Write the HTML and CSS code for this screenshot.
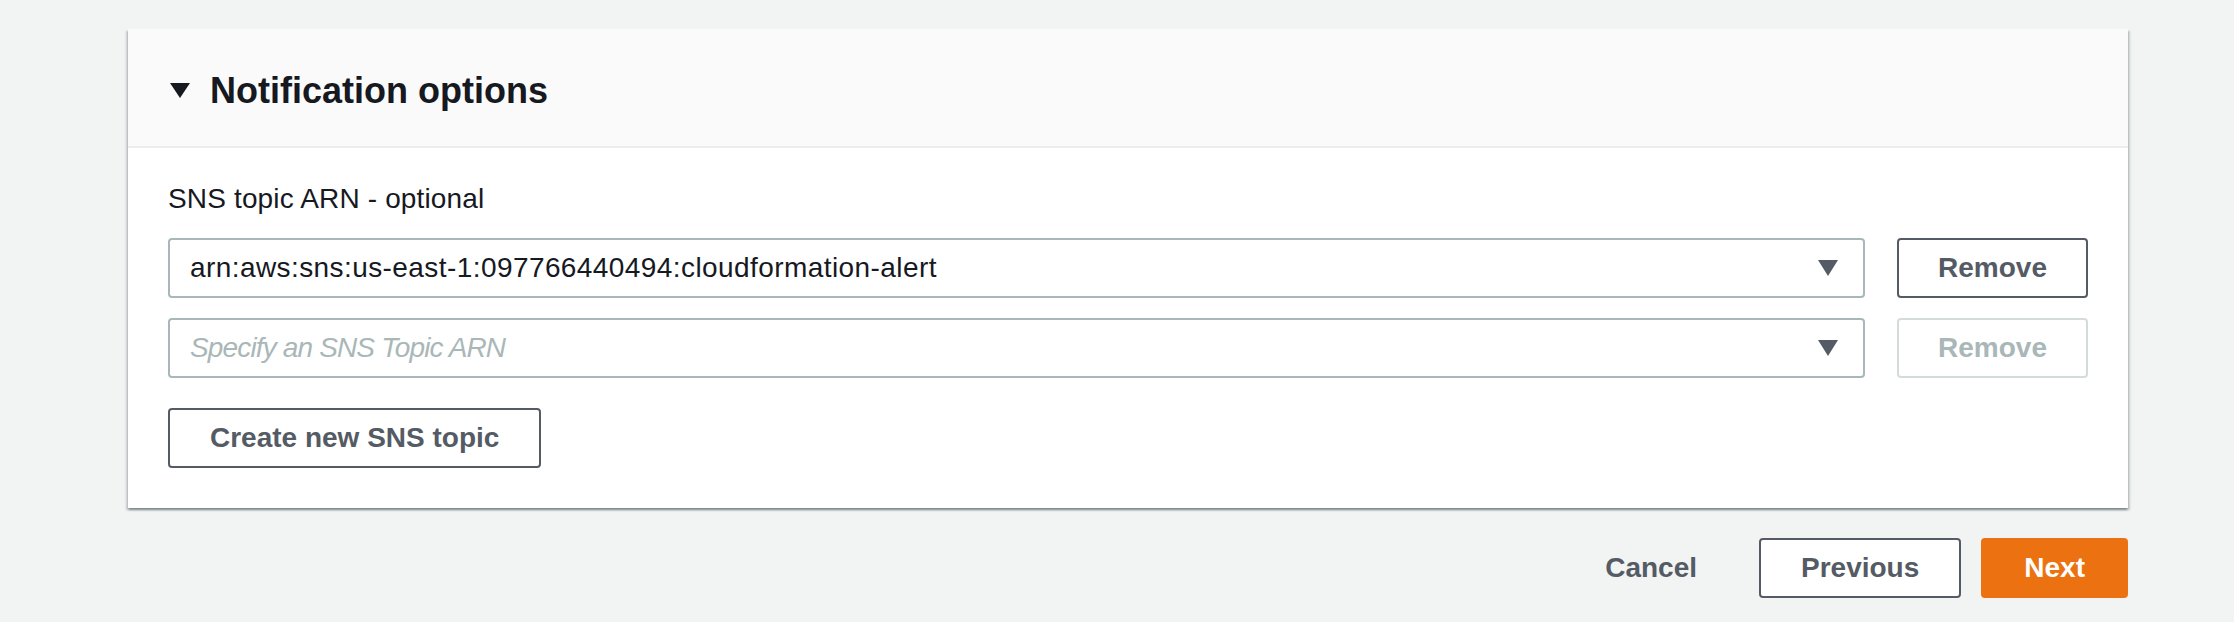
FILE: index.html
```html
<!DOCTYPE html>
<html lang="en">
<head>
<meta charset="utf-8">
<title>Notification options</title>
<link rel="stylesheet" href="styles.css">
</head>
<body>
<main class="page">
  <section class="card">
    <header class="card-header">
      <svg class="caret" width="20" height="15" viewBox="0 0 20 15" aria-hidden="true"><polygon points="0,0 20,0 10,15" fill="#16191f"/></svg>
      <h2 class="card-title">Notification options</h2>
    </header>
    <div class="card-body">
      <label class="field-label">SNS topic ARN - optional</label>
      <div class="rows">
        <div class="row">
          <div class="select">
            <span class="select-value">arn:aws:sns:us-east-1:097766440494:cloudformation-alert</span>
            <svg class="select-arrow" width="20" height="16" viewBox="0 0 20 16" aria-hidden="true"><polygon points="0,0 20,0 10,16" fill="#545b64"/></svg>
          </div>
          <button class="btn btn-remove">Remove</button>
        </div>
        <div class="row">
          <div class="select">
            <span class="select-placeholder">Specify an SNS Topic ARN</span>
            <svg class="select-arrow" width="20" height="16" viewBox="0 0 20 16" aria-hidden="true"><polygon points="0,0 20,0 10,16" fill="#545b64"/></svg>
          </div>
          <button class="btn btn-remove btn-disabled">Remove</button>
        </div>
      </div>
      <div class="create-row">
        <button class="btn btn-normal">Create new SNS topic</button>
      </div>
    </div>
  </section>
  <footer class="actions">
    <button class="btn btn-link">Cancel</button>
    <button class="btn btn-normal">Previous</button>
    <button class="btn btn-primary">Next</button>
  </footer>
</main>
</body>
</html>
```
FILE: styles.css
```css
html, body {
  margin: 0;
  padding: 0;
  background: #f2f3f3;
}

body {
  font-family: "Liberation Sans", Arial, sans-serif;
  color: #16191f;
}

.page {
  width: 2000px;
  margin-left: 128px;
  padding-top: 29px;
}

.card {
  background: #ffffff;
  box-shadow: 0 2px 2px 0 rgba(0, 28, 36, 0.3), 2px 2px 2px 0 rgba(0, 28, 36, 0.15), -2px 2px 2px 0 rgba(0, 28, 36, 0.15);
}

.card-header {
  display: flex;
  align-items: center;
  gap: 20px;
  background: #fafafa;
  height: 119px;
  box-sizing: border-box;
  padding: 6px 40px 0 42px;
  border-bottom: 2px solid #eaeded;
}

.caret {
  display: block;
  flex: none;
}

.card-title {
  margin: 0;
  font-size: 36px;
  line-height: 44px;
  font-weight: 700;
  color: #16191f;
}

.card-body {
  padding: 31px 40px 40px;
}

.field-label {
  display: block;
  font-size: 28px;
  line-height: 40px;
  letter-spacing: 0.15px;
  color: #16191f;
}

.rows {
  display: flex;
  flex-direction: column;
  gap: 20px;
  margin-top: 19px;
}

.row {
  display: flex;
  gap: 32px;
  align-items: stretch;
}

.select {
  flex: 1;
  height: 60px;
  box-sizing: border-box;
  border: 2px solid #aab7b8;
  border-radius: 4px;
  display: flex;
  align-items: center;
  justify-content: space-between;
  padding: 0 25px 0 20px;
  background: #ffffff;
}

.select-value {
  font-size: 28px;
  letter-spacing: 0.42px;
  color: #16191f;
  white-space: nowrap;
}

.select-placeholder {
  font-size: 28px;
  font-style: italic;
  letter-spacing: -0.85px;
  color: #aab7b8;
  white-space: nowrap;
}

.select-arrow {
  display: block;
  flex: none;
}

.btn {
  font-family: "Liberation Sans", Arial, sans-serif;
  font-size: 28px;
  font-weight: 700;
  height: 60px;
  box-sizing: border-box;
  border: 2px solid #545b64;
  border-radius: 4px;
  background: #ffffff;
  color: #545b64;
  padding: 0 40px;
  display: inline-flex;
  align-items: center;
  justify-content: center;
  margin: 0;
  cursor: pointer;
}

.btn-remove {
  width: 191px;
  padding: 0;
  flex: none;
}

.btn-disabled {
  border-color: #d5dbdb;
  color: #aab7b8;
}

.create-row {
  margin-top: 30px;
  display: flex;
}

.actions {
  display: flex;
  justify-content: flex-end;
  gap: 20px;
  margin-top: 30px;
}

.btn-link {
  background: transparent;
  border-color: transparent;
  padding: 0 40px;
}

.btn-primary {
  background: #ec7211;
  border-color: #ec7211;
  color: #ffffff;
  padding: 0 41px;
}
```
